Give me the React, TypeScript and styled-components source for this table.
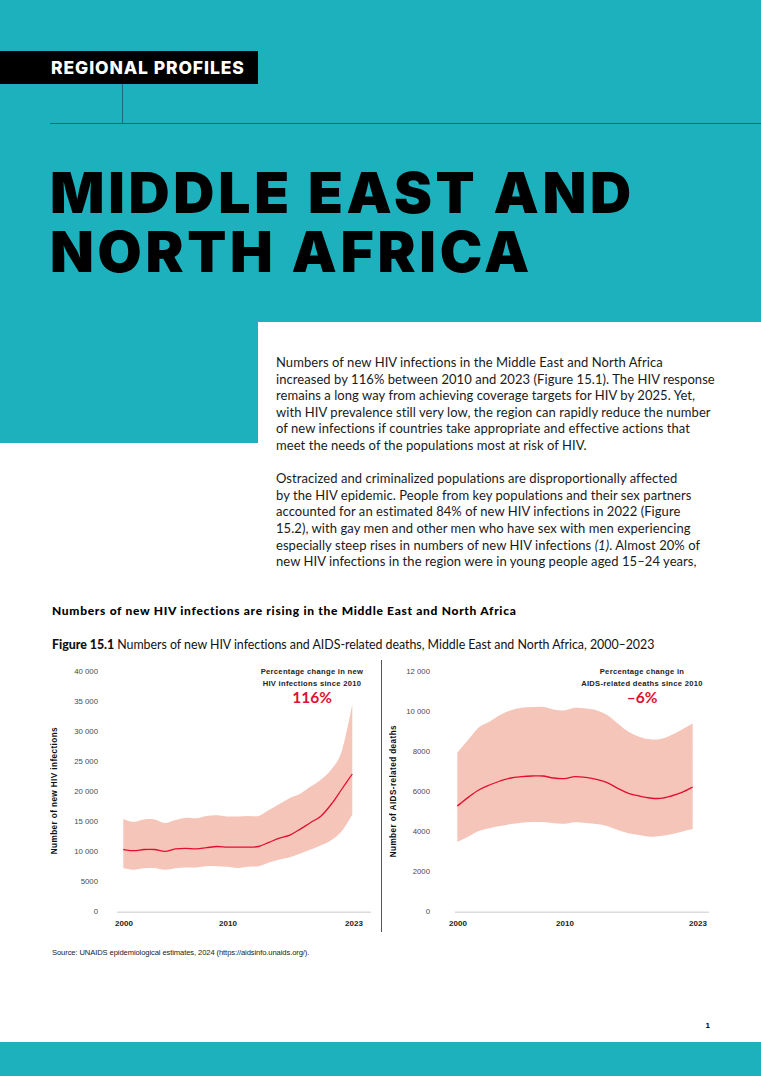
import React from "react";
import styled, { createGlobalStyle } from "styled-components";

const TEAL = "#1cb1bc";
const RED = "#e20f30";
const BAND = "#f6c5b9";

const GlobalStyle = createGlobalStyle`
  html, body { margin: 0; padding: 0; background: #fff; }
  body { font-family: Lato, "Liberation Sans", sans-serif; color: #111; }
`;

type Pt = [number, number];

// catmull-rom to bezier so the lines look like the smoothed chart in the report
const smooth = (pts: Pt[]) => {
  let d = `M${pts[0][0].toFixed(1)},${pts[0][1].toFixed(1)}`;
  for (let i = 0; i < pts.length - 1; i++) {
    const p0 = pts[i - 1] || pts[i];
    const p1 = pts[i];
    const p2 = pts[i + 1];
    const p3 = pts[i + 2] || p2;
    const c1x = p1[0] + (p2[0] - p0[0]) / 6;
    const c1y = p1[1] + (p2[1] - p0[1]) / 6;
    const c2x = p2[0] - (p3[0] - p1[0]) / 6;
    const c2y = p2[1] - (p3[1] - p1[1]) / 6;
    d += ` C${c1x.toFixed(1)},${c1y.toFixed(1)} ${c2x.toFixed(1)},${c2y.toFixed(1)} ${p2[0].toFixed(1)},${p2[1].toFixed(1)}`;
  }
  return d;
};

const charts = [
  {
    key: "infections",
    title: "Number of new HIV infections",
    originX: 62,
    width: 319,
    labelRight: 98,
    x0: 123.3,
    step: 10.41,
    pxPerK: 5.985,
    ticks: [
      [40, "40 000"], [35, "35 000"], [30, "30 000"], [25, "25 000"],
      [20, "20 000"], [15, "15 000"], [10, "10 000"], [5, "5000"], [0, "0"],
    ],
    base: [117, 371],
    years: [[124, "2000"], [228, "2010"], [354, "2023"]],
    noteX: 312,
    note: ["Percentage change in new", "HIV infections since 2010"],
    value: "116%",
    mid: [10.4, 10.2, 10.4, 10.4, 10.1, 10.5, 10.6, 10.5, 10.7, 10.9, 10.8, 10.8, 10.8, 10.9, 11.6, 12.3, 12.8, 13.8, 14.9, 16.0, 18.0, 20.5, 23.0],
    upper: [15.5, 15.0, 15.4, 15.4, 14.8, 15.3, 15.7, 15.6, 16.0, 16.1, 15.9, 15.9, 16.0, 16.0, 17.0, 18.0, 19.0, 19.7, 20.9, 22.1, 23.8, 26.9, 34.6],
    lower: [7.25, 7.0, 7.25, 7.3, 7.0, 7.25, 7.4, 7.4, 7.6, 7.6, 7.5, 7.3, 7.5, 7.6, 8.2, 8.7, 9.1, 9.7, 10.4, 11.1, 12.0, 13.5, 16.2],
  },
  {
    key: "deaths",
    title: "Number of AIDS-related deaths",
    originX: 401,
    width: 320,
    labelRight: 430,
    x0: 457.3,
    step: 10.7,
    pxPerK: 19.95,
    ticks: [
      [12, "12 000"], [10, "10 000"], [8, "8000"], [6, "6000"],
      [4, "4000"], [2, "2000"], [0, "0"],
    ],
    base: [455, 709],
    years: [[458, "2000"], [565, "2010"], [698, "2023"]],
    noteX: 642,
    note: ["Percentage change in", "AIDS-related deaths since 2010"],
    value: "–6%",
    mid: [5.3, 5.72, 6.1, 6.35, 6.55, 6.7, 6.77, 6.8, 6.8, 6.7, 6.67, 6.77, 6.73, 6.63, 6.47, 6.18, 5.93, 5.8, 5.7, 5.68, 5.8, 5.98, 6.25],
    upper: [7.97, 8.6, 9.24, 9.52, 9.86, 10.1, 10.22, 10.26, 10.27, 10.14, 10.09, 10.22, 10.19, 10.1, 9.86, 9.44, 9.02, 8.77, 8.64, 8.65, 8.85, 9.14, 9.44],
    lower: [3.5, 3.76, 4.04, 4.18, 4.29, 4.39, 4.46, 4.49, 4.49, 4.43, 4.41, 4.48, 4.44, 4.39, 4.29, 4.09, 3.93, 3.84, 3.76, 3.79, 3.88, 4.01, 4.14],
  },
];

const TOP = 660;
const ZERO = 911.7;

const Chart = ({ c }: { c: (typeof charts)[number] }) => {
  const px = (x: number) => x - c.originX;
  const py = (v: number) => ZERO - TOP - v * c.pxPerK;
  const pts = (arr: number[]): Pt[] => arr.map((v, i) => [px(c.x0 + i * c.step), py(v)]);
  const up = pts(c.upper);
  const lo = pts(c.lower).reverse();
  const band = smooth(up) + " L" + smooth(lo).slice(1) + " Z";

  return (
    <svg width={c.width} height={275} viewBox={`0 0 ${c.width} 275`}>
      {c.ticks.map(([v, label]) => (
        <TickText key={label as string} x={px(c.labelRight)} y={py(v as number)} textAnchor="end" dominantBaseline="middle">
          {label}
        </TickText>
      ))}
      <path d={band} fill={BAND} />
      <path d={smooth(pts(c.mid))} fill="none" stroke={RED} strokeWidth={1.3} />
      <line x1={px(c.base[0])} x2={px(c.base[1])} y1={py(0) + 0.5} y2={py(0) + 0.5} stroke="#dcdcdc" strokeWidth={1.5} />
      {c.years.map(([x, label]) => (
        <YearText key={label as string} x={px(x as number)} y={264} textAnchor="middle" dominantBaseline="middle">
          {label}
        </YearText>
      ))}
      <NoteText x={px(c.noteX)} y={12} textAnchor="middle" dominantBaseline="middle">{c.note[0]}</NoteText>
      <NoteText x={px(c.noteX)} y={24} textAnchor="middle" dominantBaseline="middle">{c.note[1]}</NoteText>
      <ValueText x={px(c.noteX)} y={39.5} textAnchor="middle" dominantBaseline="middle">{c.value}</ValueText>
    </svg>
  );
};

const App = () => {
  return (
    <Page>
      <GlobalStyle />
      <Hero>
        <Label>REGIONAL PROFILES</Label>
        <Stem />
        <Rule />
        <Title>
          <TitleLine>MIDDLE EAST AND</TitleLine>
          <TitleLine>NORTH AFRICA</TitleLine>
        </Title>
      </Hero>

      <IntroRow>
        <TealTail />
        <Body>
          <Para>
            Numbers of new HIV infections in the Middle East and North Africa<br />
            increased by 116% between 2010 and 2023 (Figure 15.1). The HIV response<br />
            remains a long way from achieving coverage targets for HIV by 2025. Yet,<br />
            with HIV prevalence still very low, the region can rapidly reduce the number<br />
            of new infections if countries take appropriate and effective actions that<br />
            meet the needs of the populations most at risk of HIV.
          </Para>
          <Para>
            Ostracized and criminalized populations are disproportionally affected<br />
            by the HIV epidemic. People from key populations and their sex partners<br />
            accounted for an estimated 84% of new HIV infections in 2022 (Figure<br />
            15.2), with gay men and other men who have sex with men experiencing<br />
            especially steep rises in numbers of new HIV infections <em>(1)</em>. Almost 20% of<br />
            new HIV infections in the region were in young people aged 15–24 years,
          </Para>
        </Body>
      </IntroRow>

      <FigureSection>
        <FigureHeading>Numbers of new HIV infections are rising in the Middle East and North Africa</FigureHeading>
        <FigureCaption>
          <strong>Figure 15.1</strong> Numbers of new HIV infections and AIDS-related deaths, Middle East and North Africa, 2000–2023
        </FigureCaption>
        <ChartsRow>
          <ChartPanel $divider={false}>
            <AxisTitle>{charts[0].title}</AxisTitle>
            <Chart c={charts[0]} />
          </ChartPanel>
          <ChartPanel $divider>
            <AxisTitle>{charts[1].title}</AxisTitle>
            <Chart c={charts[1]} />
          </ChartPanel>
        </ChartsRow>
        <Source>Source: UNAIDS epidemiological estimates, 2024 (https://aidsinfo.unaids.org/).</Source>
      </FigureSection>

      <PageNumber>1</PageNumber>
      <FooterBand />
    </Page>
  );
};

const Page = styled.div`
  width: 761px;
  min-height: 1076px;
  display: flex;
  flex-direction: column;
  background: #fff;
  overflow: hidden;
`;

const Hero = styled.header`
  height: 322px;
  background: ${TEAL};
  display: flex;
  flex-direction: column;
  padding-top: 51px;
  box-sizing: border-box;
`;

const Label = styled.div`
  width: 258px;
  height: 33px;
  box-sizing: border-box;
  background: #000;
  color: #fff;
  padding-left: 51px;
  display: flex;
  align-items: center;
  font-family: Inter, "Liberation Sans", sans-serif;
  font-weight: 800;
  font-size: 17.5px;
  letter-spacing: 0.9px;
`;

const Stem = styled.div`
  width: 1px;
  height: 39px;
  margin-left: 122px;
  background: #1e6a72;
`;

const Rule = styled.div`
  height: 1px;
  margin-left: 50px;
  background: #1e6a72;
`;

const Title = styled.h1`
  margin: 39px 0 0 50px;
  font-family: Inter, Lato, sans-serif;
  font-weight: 900;
  font-size: 57px;
  letter-spacing: 3.7px;
  color: #000;
`;

const TitleLine = styled.span`
  display: block;
  height: 59px;
  line-height: 59px;
  white-space: nowrap;
`;

const IntroRow = styled.section`
  display: flex;
  align-items: flex-start;
`;

const TealTail = styled.div`
  width: 258px;
  height: 121px;
  flex-shrink: 0;
  background: ${TEAL};
`;

const Body = styled.div`
  padding: 32px 0 0 18px;
  font-size: 13px;
  line-height: 16.6px;
  letter-spacing: 0.06px;
  color: #1a1a1a;
  white-space: nowrap;
`;

const Para = styled.p`
  margin: 0 0 16.6px;
  &:last-child { margin-bottom: 0; }
`;

const FigureSection = styled.section`
  display: flex;
  flex-direction: column;
  padding: 34px 0 0 52px;
`;

const FigureHeading = styled.h2`
  margin: 0;
  font-size: 12px;
  line-height: 14px;
  font-weight: 900;
  letter-spacing: 0.7px;
  color: #000;
`;

const FigureCaption = styled.div`
  margin-top: 19px;
  font-size: 12.4px;
  line-height: 16px;
  letter-spacing: -0.03px;
  color: #111;
  strong { font-weight: 900; }
`;

const ChartsRow = styled.div`
  display: flex;
  margin: 7px 0 0 -2px;
  height: 275px;
`;

const ChartPanel = styled.div<{ $divider: boolean }>`
  display: flex;
  align-items: stretch;
  border-left: ${(p) => (p.$divider ? "1px solid #555" : "none")};
  padding-left: ${(p) => (p.$divider ? "7px" : "0")};
  height: 272px;
`;

const AxisTitle = styled.div`
  width: 12px;
  writing-mode: vertical-rl;
  transform: rotate(180deg);
  text-align: center;
  align-self: center;
  margin-bottom: 10px;
  font-family: "Liberation Sans", sans-serif;
  font-weight: 700;
  font-size: 8.2px;
  letter-spacing: 0.4px;
  color: #111;
  white-space: nowrap;
`;

const TickText = styled.text`
  font-family: "Liberation Sans", sans-serif;
  font-size: 7.8px;
  fill: #4a4a4a;
`;

const YearText = styled.text`
  font-family: "Liberation Sans", sans-serif;
  font-size: 8px;
  font-weight: 700;
  fill: #222;
`;

const NoteText = styled.text`
  font-family: "Liberation Sans", sans-serif;
  font-size: 7.6px;
  font-weight: 700;
  letter-spacing: 0.3px;
  fill: #222;
`;

const ValueText = styled.text`
  font-family: Lato, "Liberation Sans", sans-serif;
  font-size: 15.5px;
  font-weight: 700;
  fill: ${RED};
`;

const Source = styled.div`
  margin-top: 13px;
  font-family: "Liberation Sans", sans-serif;
  font-size: 7.6px;
  line-height: 10px;
  letter-spacing: -0.1px;
  color: #222;
`;

const PageNumber = styled.div`
  margin: auto 0 0;
  padding: 0 51px 10px 0;
  text-align: right;
  font-family: "Liberation Sans", sans-serif;
  font-size: 8px;
  font-weight: 700;
  line-height: 12px;
  color: #000;
`;

const FooterBand = styled.div`
  height: 34px;
  background: ${TEAL};
`;

export default App;
